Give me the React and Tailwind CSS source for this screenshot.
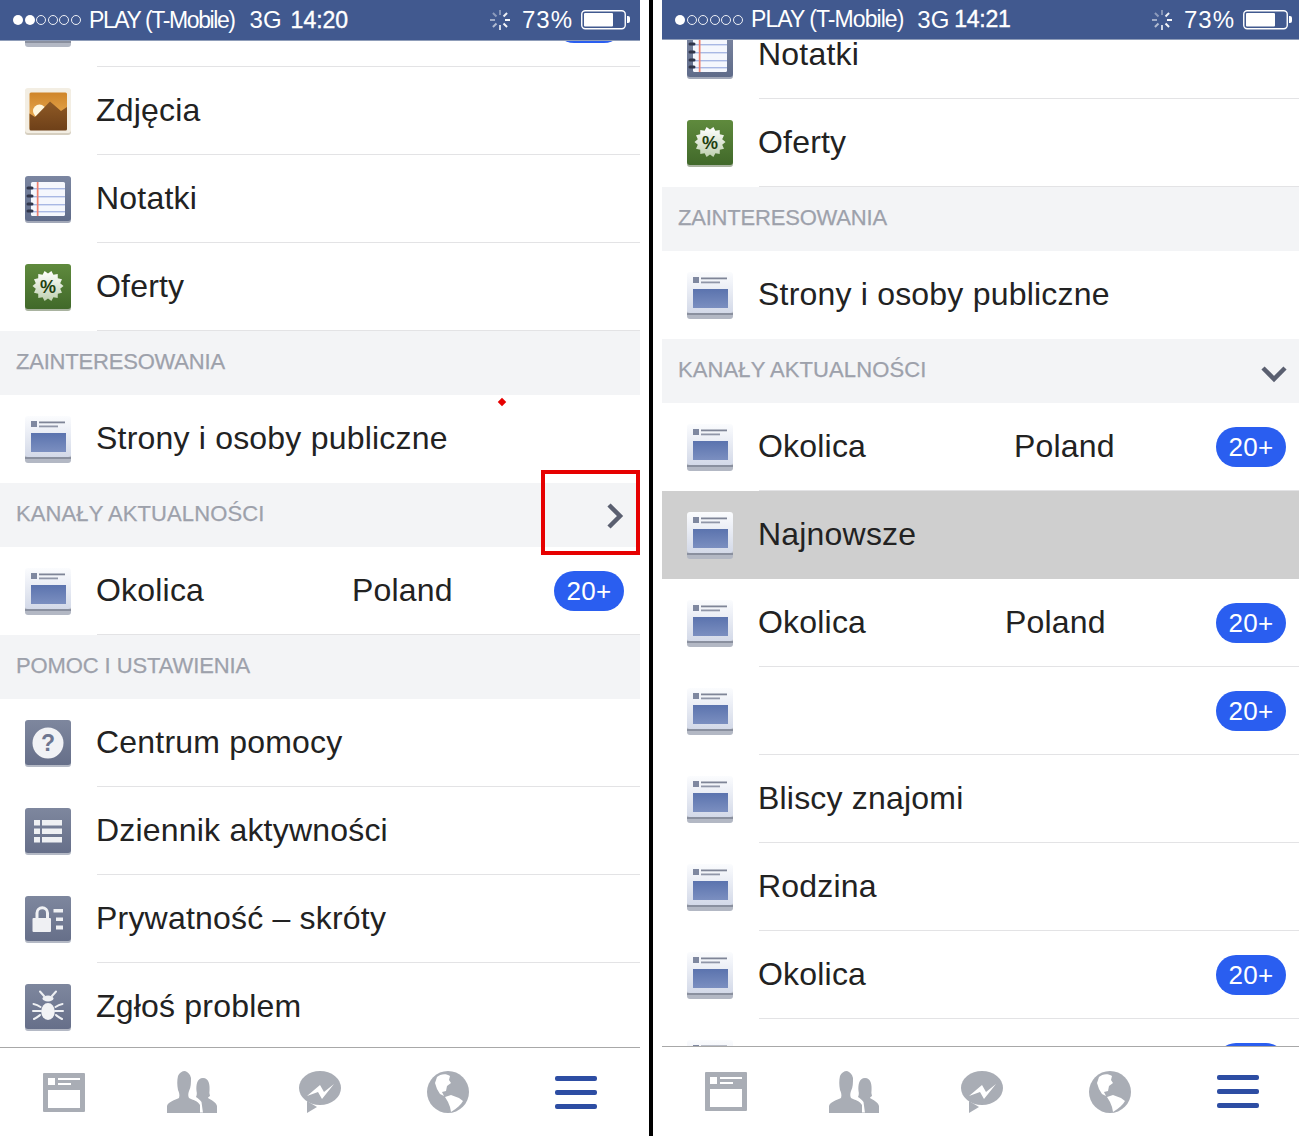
import { useId } from "react";

function Spinner() {
  const ticks = [0, 45, 90, 135, 180, 225, 270, 315];
  const op = [0.35, 0.9, 0.95, 0.95, 0.75, 0.6, 0.5, 0.4];
  return (
    <svg width="22" height="22" viewBox="-11 -11 22 22">
      {ticks.map((t, i) => (
        <line key={t} x1="0" y1="-5" x2="0" y2="-10" stroke="#fff" strokeWidth="2" strokeOpacity={op[i]} transform={`rotate(${t})`} />
      ))}
    </svg>
  );
}

function Battery() {
  return (
    <svg width="49" height="20" viewBox="0 0 49 20">
      <rect x="0.75" y="0.75" width="43.5" height="18" rx="3.5" fill="none" stroke="#fff" strokeWidth="1.4" />
      <rect x="3" y="3" width="29" height="13.5" rx="1" fill="#fff" />
      <path d="M46 6h1a2 2 0 0 1 2 2v3a2 2 0 0 1-2 2h-1z" fill="#fff" />
    </svg>
  );
}

function StatusBar({ filled, time, h, carrierCls, threeG, timeCls }) {
  const dots = [0, 1, 2, 3, 4, 5];
  return (
    <div className={`${h} shrink-0 flex items-center bg-[#41598f] text-white text-[23px] pl-[13px] pr-[10px] relative z-10 border-b border-[#8f9db9]`}>
      <div className="flex gap-[1.5px] mr-[8.5px]">
        {dots.map((d) =>
          d < filled ? (
            <span key={d} className="w-[10px] h-[10px] rounded-full bg-white" />
          ) : (
            <span key={d} className="w-[10px] h-[10px] rounded-full border border-white/90" />
          )
        )}
      </div>
      <span className={carrierCls}>PLAY (T-Mobile)</span>
      <span className={`text-[24px] ${threeG}`}>3G</span>
      <span className={`[-webkit-text-stroke:0.4px_white] ${timeCls}`}>{time}</span>
      <div className="ml-auto flex items-center">
        <Spinner />
        <span className="ml-[11px] text-[24px] tracking-[1px]">73%</span>
        <span className="ml-[8px] flex"><Battery /></span>
      </div>
    </div>
  );
}

function Frame({ children }) {
  return (
    <svg width="46" height="47" viewBox="0 0 46 47" className="block">
      {children}
    </svg>
  );
}

function FeedIcon() {
  const id = useId();
  return (
    <Frame>
      <defs>
        <linearGradient id={id + "a"} x1="0" y1="0" x2="0" y2="1">
          <stop offset="0" stopColor="#fbfcfe" />
          <stop offset="1" stopColor="#d3d9e8" />
        </linearGradient>
        <linearGradient id={id + "b"} x1="0" y1="0" x2="0" y2="1">
          <stop offset="0" stopColor="#5b73ae" />
          <stop offset="1" stopColor="#7b8fc0" />
        </linearGradient>
      </defs>
      <rect x="0" y="38" width="46" height="9" rx="3" fill="#b3b8c4" />
      <rect x="0" y="41" width="46" height="2" fill="#8a909f" />
      <rect x="0" y="0" width="46" height="41" rx="3" fill={`url(#${id}a)`} />
      <rect x="6" y="5" width="6" height="6" fill="#7f88a0" />
      <rect x="14" y="5.500" width="26" height="1.800" fill="#7f8597" />
      <rect x="14" y="9.500" width="19" height="1.800" fill="#9096a8" />
      <rect x="6" y="17" width="35" height="19" fill={`url(#${id}b)`} />
    </Frame>
  );
}

function PhotoIcon() {
  const id = useId();
  return (
    <Frame>
      <defs>
        <linearGradient id={id} x1="0" y1="0" x2="0" y2="1">
          <stop offset="0" stopColor="#cf8529" />
          <stop offset="1" stopColor="#f2b860" />
        </linearGradient>
        <linearGradient id={id + "m"} x1="0" y1="0" x2="0" y2="1">
          <stop offset="0" stopColor="#8f5a25" />
          <stop offset="1" stopColor="#6e4019" />
        </linearGradient>
      </defs>
      <rect x="0" y="1" width="46" height="46" rx="3" fill="#d6cfc0" />
      <rect x="0" y="0" width="46" height="45" rx="3" fill="#f3eee3" />
      <rect x="4.500" y="4.500" width="37.500" height="37" rx="1.500" fill={`url(#${id})`} />
      <circle cx="14.500" cy="23" r="6.500" fill="#fff6dc" />
      <path d="M4.500 25.500l5.500 3.500 15-15.500 11 9.500 6-4v22a1.500 1.500 0 0 1-1.500 1.500H6a1.500 1.500 0 0 1-1.500-1.500z" fill={`url(#${id}m)`} />
    </Frame>
  );
}

function NotesIcon() {
  const id = useId();
  const lines = [12, 20, 28, 35];
  const rings = [10.500, 18.500, 26.500, 33.500];
  return (
    <Frame>
      <defs>
        <linearGradient id={id} x1="0" y1="0" x2="0" y2="1">
          <stop offset="0" stopColor="#7b86a1" />
          <stop offset="1" stopColor="#5f6b89" />
        </linearGradient>
      </defs>
      <rect x="0" y="1" width="46" height="46" rx="3" fill="#a2a8b8" />
      <rect x="0" y="0" width="46" height="45" rx="3" fill={`url(#${id})`} />
      <rect x="6" y="6" width="34" height="34" rx="1.500" fill="#f5f7fd" />
      {lines.map((y) => (
        <rect key={y} x="6" y={y} width="34" height="1.400" fill="#a9b8e4" />
      ))}
      <rect x="11.800" y="6" width="1.700" height="34" fill="#f0806f" />
      {rings.map((y) => (
        <rect key={y} x="1.500" y={y} width="7" height="3" rx="1.500" fill="#30354a" />
      ))}
    </Frame>
  );
}

function OfferIcon() {
  const id = useId();
  const pts = [];
  for (let i = 0; i < 28; i++) {
    const r = i % 2 ? 15.500 : 12.500;
    const a = (i * Math.PI) / 14;
    pts.push(`${(23 + r * Math.sin(a)).toFixed(1)},${(22 - r * Math.cos(a)).toFixed(1)}`);
  }
  return (
    <Frame>
      <defs>
        <linearGradient id={id + "a"} x1="0" y1="0" x2="0" y2="1">
          <stop offset="0" stopColor="#5f8a3d" />
          <stop offset="1" stopColor="#41692a" />
        </linearGradient>
        <linearGradient id={id + "b"} x1="0" y1="0" x2="0" y2="1">
          <stop offset="0" stopColor="#ffffff" />
          <stop offset="1" stopColor="#bfd0b0" />
        </linearGradient>
      </defs>
      <rect x="0" y="1" width="46" height="46" rx="3" fill="#a9b3a0" />
      <rect x="0" y="0" width="46" height="45" rx="3" fill={`url(#${id}a)`} />
      <polygon points={pts.join(" ")} fill={`url(#${id}b)`} />
      <text x="23" y="28.500" textAnchor="middle" fontSize="18" fontWeight="700" fontFamily="Liberation Sans" fill="#1f3f10">%</text>
    </Frame>
  );
}

function Slate({ children }) {
  const id = useId();
  return (
    <Frame>
      <defs>
        <linearGradient id={id} x1="0" y1="0" x2="0" y2="1">
          <stop offset="0" stopColor="#7e879e" />
          <stop offset="1" stopColor="#666f89" />
        </linearGradient>
      </defs>
      <rect x="0" y="1" width="46" height="46" rx="3" fill="#b4b9c5" />
      <rect x="0" y="0" width="46" height="45" rx="3" fill={`url(#${id})`} />
      {children}
    </Frame>
  );
}

function HelpIcon() {
  return (
    <Slate>
      <circle cx="23" cy="23" r="15.500" fill="#f1f2f5" />
      <text x="23" y="31" textAnchor="middle" fontSize="23" fontWeight="700" fontFamily="Liberation Sans" fill="#6d7690">?</text>
    </Slate>
  );
}

function ListIcon() {
  const ys = [12, 20.500, 29];
  return (
    <Slate>
      {ys.map((y) => (
        <g key={y} fill="#eef0f3">
          <rect x="9" y={y} width="6" height="5.500" />
          <rect x="17" y={y} width="20" height="5.500" />
        </g>
      ))}
    </Slate>
  );
}

function LockIcon() {
  return (
    <Slate>
      <path d="M12 23v-6a5 5 0 0 1 10.500 0v6" fill="none" stroke="#f0f1f4" strokeWidth="3" />
      <rect x="7.500" y="22" width="18.500" height="14" rx="1" fill="#eff0f3" />
      <rect x="28.500" y="13" width="9.500" height="3.500" fill="#eef0f3" />
      <rect x="31" y="21.500" width="7" height="3.500" fill="#eef0f3" />
      <rect x="31" y="29.500" width="7" height="4" fill="#eef0f3" />
    </Slate>
  );
}

function BugIcon() {
  return (
    <Slate>
      <g fill="none" stroke="#eef0f3" strokeWidth="2" strokeLinecap="round">
        <path d="M15 7.500l4 4.500M31 7.500l-4 4.500M8.500 20c3 .5 5 1.500 7 3M37.500 20c-3 .5-5 1.500-7 3M8 27h8M38 27h-8M9 35c2-1 4-2 6-4M37 35c-2-1-4-2-6-4" />
      </g>
      <ellipse cx="23" cy="14.500" rx="5.500" ry="3" fill="#eef0f3" />
      <ellipse cx="23" cy="27.500" rx="6.800" ry="8.500" fill="#f2f3f5" />
    </Slate>
  );
}

const ICONS = {
  feed: FeedIcon,
  photo: PhotoIcon,
  notes: NotesIcon,
  offer: OfferIcon,
  help: HelpIcon,
  list: ListIcon,
  lock: LockIcon,
  bug: BugIcon,
};

function Row({ icon, label, place, nameW, badge, active, noLine }) {
  const Icon = ICONS[icon];
  return (
    <div className={`h-[88px] flex ${active ? "bg-[#cfcfcf]" : ""}`}>
      <div className="w-[97px] shrink-0 pl-[25px] flex items-center">
        <Icon />
      </div>
      <div className={`flex-1 flex items-center pr-[16px] border-b text-[32px] tracking-[0.2px] text-[#222222] ${active || noLine ? "border-transparent" : "border-[#e3e3e5]"}`}>
        <span className={`-ml-px -mt-[2px] ${nameW || ""}`}>{label}</span>
        {place && <span className="-mt-[2px]">{place}</span>}
        {badge && (
          <span className="ml-auto w-[70px] h-[40px] pt-[2px] rounded-full bg-[#2a5ef0] text-white text-[26px] tracking-[0.3px] flex items-center justify-center">
            20+
          </span>
        )}
      </div>
    </div>
  );
}

function Section({ label, chevron, cls }) {
  return (
    <div className="h-[64px] flex items-center justify-between bg-[#f3f4f6] pl-[16px] pr-[13px] pb-[4px]">
      <span className={`text-[22px] text-[#9da1ab] [-webkit-text-stroke:0.25px_#9da1ab] ${cls}`}>{label}</span>
      {chevron === "right" && (
        <svg width="20" height="28" viewBox="0 0 20 28" className="mt-[6px] mr-[2px]">
          <path d="M4 3l11 11L4 25" fill="none" stroke="#5a5f70" strokeWidth="4.500" />
        </svg>
      )}
      {chevron === "down" && (
        <svg width="28" height="20" viewBox="0 0 28 20" className="mt-[9px] mr-[1px]">
          <path d="M3 4l11 11L25 4" fill="none" stroke="#5a5f70" strokeWidth="4.500" />
        </svg>
      )}
    </div>
  );
}

function NewsTab() {
  return (
    <svg width="42" height="39" viewBox="0 0 42 39">
      <path fillRule="evenodd" d="M1 0h40a1 1 0 0 1 1 1v37a1 1 0 0 1-1 1H1a1 1 0 0 1-1-1V1a1 1 0 0 1 1-1zM5 17v18h32V17z" fill="#a9adb5" />
      <rect x="5" y="5" width="7" height="7" fill="#fff" />
      <rect x="15" y="5" width="22" height="2" fill="#fff" />
      <rect x="15" y="10" width="13" height="2" fill="#fff" />
    </svg>
  );
}

function FriendsTab() {
  return (
    <svg width="50" height="42" viewBox="0 0 50 42">
      <path d="M36 42l-1.500-11C33 29 31 27 29 26c1-2 1-4 .5-6C29 14 30 7 36 7s7 7 6.500 13c-.5 2 .5 4 .5 5-1 1-2 1-2 2 3 2 8 4 9 8v7z" fill="#a9adb5" />
      <path d="M0 42v-7c1-4 8-6 12-8 1-3 0-6-1-8-1-5-1-10 0-14 1-3 4-5 7-5 3 1 5 3 6 7 0 5 0 9-2 13-1 3-1 5 0 7 4 2 9 3 11 7v8z" fill="#a9adb5" stroke="#fff" strokeWidth="1.200" paintOrder="stroke" />
      <rect x="0" y="41.500" width="36" height="0.500" fill="#a9adb5" />
    </svg>
  );
}

function MessengerTab() {
  return (
    <svg width="42" height="42" viewBox="0 0 42 42">
      <ellipse cx="21" cy="17" rx="21" ry="17" fill="#a9adb5" />
      <path d="M8 30v12l10-6z" fill="#a9adb5" />
      <path d="M8 25l13-11 4 7 10-8-12 15-4-7z" fill="#fff" />
    </svg>
  );
}

function GlobeTab() {
  return (
    <svg width="42" height="42" viewBox="0 0 42 42">
      <circle cx="21" cy="21" r="21" fill="#a9adb5" />
      <path d="M10 6c3-3 9-4 13-1l-1 4 2 3-4 3-1 5-4 1 2 4-4-2-3-5-2-6z" fill="#fff" />
      <path d="M18 26l6-2 8 3 4 3c-2 4-6 7-12 11l-1-5-2-5z" fill="#fff" />
    </svg>
  );
}

function MenuTab() {
  const bars = [0, 1, 2];
  return (
    <div className="w-[42px] flex flex-col gap-[9px]">
      {bars.map((b) => (
        <span key={b} className="h-[5px] rounded-[2px] bg-[#2d4da3]" />
      ))}
    </div>
  );
}

function TabBar({ h }) {
  return (
    <div className={`${h} shrink-0 grid grid-cols-5 items-center justify-items-center bg-white border-t border-[#a8a8a8] relative z-10`}>
      <NewsTab />
      <FriendsTab />
      <MessengerTab />
      <GlobeTab />
      <MenuTab />
    </div>
  );
}

function LeftPhone() {
  return (
    <div className="w-[640px] h-[1136px] shrink-0 flex flex-col relative">
      <StatusBar filled={2} time="14:20" h="h-[41px]" carrierCls="tracking-[-1.4px]" threeG="ml-[15px]" timeCls="ml-[9px]" />
      <div className="flex-1 min-h-0 overflow-hidden">
        <div className="-mt-[62px]">
          <Row icon="feed" label="" badge />
          <Row icon="photo" label="Zdjęcia" />
          <Row icon="notes" label="Notatki" />
          <Row icon="offer" label="Oferty" />
          <Section label="ZAINTERESOWANIA" cls="tracking-[-0.2px]" />
          <Row icon="feed" label="Strony i osoby publiczne" noLine />
          <Section label="KANAŁY AKTUALNOŚCI" cls="tracking-[0.1px]" chevron="right" />
          <Row icon="feed" label="Okolica" nameW="w-[256px]" place="Poland" badge />
          <Section label="POMOC I USTAWIENIA" cls="tracking-[-0.1px]" />
          <Row icon="help" label="Centrum pomocy" />
          <Row icon="list" label="Dziennik aktywności" />
          <Row icon="lock" label="Prywatność – skróty" />
          <Row icon="bug" label="Zgłoś problem" />
        </div>
      </div>
      <TabBar h="h-[89px]" />
      <div className="absolute left-[541px] top-[470px] w-[99px] h-[85px] border-4 border-[#e60000] z-20" />
      <div className="absolute left-[499px] top-[399px] w-[6px] h-[6px] rotate-45 bg-[#e60000] z-20" />
    </div>
  );
}

function RightPhone() {
  return (
    <div className="w-[640px] h-[1136px] shrink-0 flex flex-col">
      <StatusBar filled={1} time="14:21" h="h-[40px]" carrierCls="tracking-[-0.95px]" threeG="ml-[14px]" timeCls="ml-[5px] tracking-[-0.3px]" />
      <div className="flex-1 min-h-0 overflow-hidden">
        <div className="-mt-[29px]">
          <Row icon="notes" label="Notatki" />
          <Row icon="offer" label="Oferty" />
          <Section label="ZAINTERESOWANIA" cls="tracking-[-0.2px]" />
          <Row icon="feed" label="Strony i osoby publiczne" noLine />
          <Section label="KANAŁY AKTUALNOŚCI" cls="tracking-[0.1px]" chevron="down" />
          <Row icon="feed" label="Okolica" nameW="w-[256px]" place="Poland" badge />
          <Row icon="feed" label="Najnowsze" active />
          <Row icon="feed" label="Okolica" nameW="w-[247px]" place="Poland" badge />
          <Row icon="feed" label="" badge />
          <Row icon="feed" label="Bliscy znajomi" />
          <Row icon="feed" label="Rodzina" />
          <Row icon="feed" label="Okolica" badge />
          <Row icon="feed" label="" badge />
        </div>
      </div>
      <TabBar h="h-[90px]" />
    </div>
  );
}

export default function App() {
  return (
    <div className="w-[1299px] h-[1136px] overflow-hidden flex bg-white font-['Liberation_Sans',sans-serif]">
      <LeftPhone />
      <div className="w-[9px] shrink-0" />
      <div className="w-[4px] shrink-0 bg-black" />
      <div className="w-[9px] shrink-0" />
      <RightPhone />
    </div>
  );
}
